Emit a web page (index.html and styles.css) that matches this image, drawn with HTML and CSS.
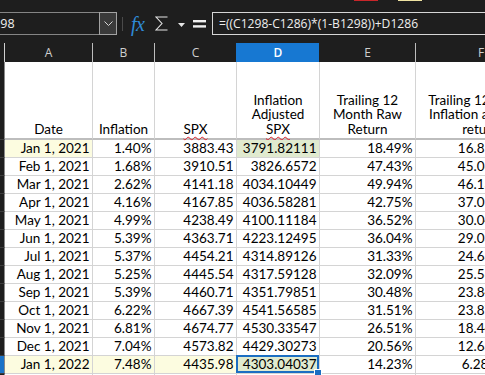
FILE: index.html
```html
<!DOCTYPE html>
<html>
<head>
<meta charset="utf-8">
<link rel="stylesheet" href="styles.css">
</head>
<body>
<div class="top">
  <div class="ribbon-marks"><span class="mark red"></span><span class="mark yellow"></span></div>
  <div class="fbar">
    <div class="namebox">
      <span class="nb-text">D1298</span>
      <span class="nb-drop"><svg width="9" height="5" viewBox="0 0 9 5"><polyline points="0.5,0.5 4.5,4.5 8.5,0.5" fill="none" stroke="#d4d4d4" stroke-width="1"/></svg></span>
    </div>
    <span class="vsep"></span>
    <span class="fx">fx</span>
    <svg class="sigma" width="13" height="15" viewBox="0 0 13 15"><path d="M12.5,1 H1 L7,7.5 L1,14 H12.5" fill="none" stroke="#e6e6e6" stroke-width="1.1"/></svg>
    <svg class="tri" width="7" height="4" viewBox="0 0 7 4"><polygon points="0,0 7,0 3.5,4" fill="#e6e6e6"/></svg>
    <svg class="eq" width="13" height="8" viewBox="0 0 13 8"><rect x="0" y="0" width="13" height="2.4" fill="#f0f0f0"/><rect x="0" y="5.2" width="13" height="2.4" fill="#f0f0f0"/></svg>
    <div class="formula">=((C1298-C1286)*(1-B1298))+D1286</div>
  </div>
</div>

<div class="colhdr">
  <div class="ch corner"></div>
  <div class="ch">A</div>
  <div class="ch">B</div>
  <div class="ch cc">C</div>
  <div class="ch cd">D</div>
  <div class="ch">E</div>
  <div class="ch cf">F</div>
</div>

<div class="sheet">
  <div class="rh rh-head"></div>
  <div class="h"><span>Date</span></div>
  <div class="h"><span>Inflation</span></div>
  <div class="h"><span class="spell">SPX</span></div>
  <div class="h"><span>Inflation</span><span>Adjusted</span><span class="spell">SPX</span></div>
  <div class="h"><span>Trailing 12</span><span>Month Raw</span><span>Return</span></div>
  <div class="h"><span>Trailing 12 Month</span><span>Inflation adjusted</span><span>return</span></div>

  <div class="rh"></div><div class="c yel">Jan 1, 2021</div><div class="c">1.40%</div><div class="c">3883.43</div><div class="c grn">3791.82111</div><div class="c">18.49%</div><div class="c f">16.85%</div>
  <div class="rh"></div><div class="c">Feb 1, 2021</div><div class="c">1.68%</div><div class="c">3910.51</div><div class="c">3826.6572</div><div class="c">47.43%</div><div class="c f">45.06%</div>
  <div class="rh"></div><div class="c">Mar 1, 2021</div><div class="c">2.62%</div><div class="c">4141.18</div><div class="c">4034.10449</div><div class="c">49.94%</div><div class="c f">46.13%</div>
  <div class="rh"></div><div class="c">Apr 1, 2021</div><div class="c">4.16%</div><div class="c">4167.85</div><div class="c">4036.58281</div><div class="c">42.75%</div><div class="c f">37.05%</div>
  <div class="rh"></div><div class="c">May 1, 2021</div><div class="c">4.99%</div><div class="c">4238.49</div><div class="c">4100.11184</div><div class="c">36.52%</div><div class="c f">30.04%</div>
  <div class="rh"></div><div class="c">Jun 1, 2021</div><div class="c">5.39%</div><div class="c">4363.71</div><div class="c">4223.12495</div><div class="c">36.04%</div><div class="c f">29.03%</div>
  <div class="rh"></div><div class="c">Jul 1, 2021</div><div class="c">5.37%</div><div class="c">4454.21</div><div class="c">4314.89126</div><div class="c">31.33%</div><div class="c f">24.63%</div>
  <div class="rh"></div><div class="c">Aug 1, 2021</div><div class="c">5.25%</div><div class="c">4445.54</div><div class="c">4317.59128</div><div class="c">32.09%</div><div class="c f">25.56%</div>
  <div class="rh"></div><div class="c">Sep 1, 2021</div><div class="c">5.39%</div><div class="c">4460.71</div><div class="c">4351.79851</div><div class="c">30.48%</div><div class="c f">23.84%</div>
  <div class="rh"></div><div class="c">Oct 1, 2021</div><div class="c">6.22%</div><div class="c">4667.39</div><div class="c">4541.56585</div><div class="c">31.51%</div><div class="c f">23.87%</div>
  <div class="rh"></div><div class="c">Nov 1, 2021</div><div class="c">6.81%</div><div class="c">4674.77</div><div class="c">4530.33547</div><div class="c">26.51%</div><div class="c f">18.44%</div>
  <div class="rh"></div><div class="c">Dec 1, 2021</div><div class="c">7.04%</div><div class="c">4573.82</div><div class="c">4429.30273</div><div class="c">20.56%</div><div class="c f">12.63%</div>
  <div class="rh sel-row"></div><div class="c yel">Jan 1, 2022</div><div class="c yel">7.48%</div><div class="c yel">4435.98</div><div class="c grn active">4303.04037</div><div class="c">14.23%</div><div class="c f">6.28%</div>
  <div class="rh"></div><div class="c"></div><div class="c"></div><div class="c"></div><div class="c"></div><div class="c"></div><div class="c f"></div>
</div>
</body>
</html>
```

FILE: styles.css
```css
* { box-sizing: border-box; }
html, body { margin: 0; padding: 0; }
body {
  width: 485px;
  height: 375px;
  overflow: hidden;
  background: #ffffff;
  font-family: Lato, "Liberation Sans", sans-serif;
}

/* ---------- formula bar ---------- */
.top {
  background: #1e1e1e;
  height: 43px;
  display: flex;
  flex-direction: column;
}
.ribbon-marks { display: flex; height: 2px; }
.mark { height: 1px; width: 24px; }
.mark.red { margin-left: 354px; background: #c8262a; }
.mark.yellow { margin-left: 20px; background: #efe3a2; }

.fbar {
  flex: 1;
  display: flex;
  align-items: center;
  padding-top: 2px;
  white-space: nowrap;
}
.namebox {
  margin-left: -40px;
  width: 157px;
  height: 23px;
  border: 1px solid #858585;
  display: flex;
  flex: none;
}
.nb-text {
  flex: 1;
  color: #f0f0f0;
  font-family: "Open Sans", sans-serif;
  font-size: 12.5px;
  line-height: 21px;
  padding-left: 16px;
}
.nb-drop {
  width: 18px;
  margin: -1px -1px -1px 0;
  border: 1px solid #a3a3a3;
  background: #3a3a3a;
  display: flex;
  align-items: center;
  justify-content: center;
}
.vsep {
  flex: none;
  width: 1px;
  height: 14px;
  background: #4a4a4a;
  margin-left: 5px;
}
.fx {
  flex: none;
  width: 16px;
  margin-left: 8px;
  color: #2f8ad6;
  font-family: "Liberation Serif", serif;
  font-style: italic;
  font-size: 20px;
  line-height: 20px;
  letter-spacing: -0.5px;
}
.sigma { flex: none; margin-left: 8px; }
.tri { flex: none; margin-left: 10px; margin-top: 3px; }
.eq { flex: none; margin-left: 8px; }
.formula {
  flex: none;
  width: 290px;
  margin-left: 6px;
  height: 23px;
  border: 1px solid #d6d6d6;
  color: #eeeeee;
  font-family: "Open Sans", sans-serif;
  font-size: 12.1px;
  line-height: 21px;
  padding-left: 6px;
}

/* ---------- column headers ---------- */
.colhdr {
  display: grid;
  grid-template-columns: 5px 88px 62px 82px 83px 96px 130px;
  grid-template-rows: 19px;
  width: max-content;
  height: 19px;
  background: #1e1e1e;
}
.ch {
  border-right: 1px solid #bdbdbd;
  color: #cfcfcf;
  font-family: "Open Sans", sans-serif;
  font-size: 12px;
  line-height: 19px;
  text-align: center;
}
.ch.corner { border-right-color: #d0d0d0; }
.ch.cc { border-right-color: #1778d2; }
.ch.cd { background: #1778d2; color: #ffffff; border-right-color: #1e1e1e; font-weight: 600; }
.ch.cf { border-right: none; }

/* ---------- sheet ---------- */
.sheet {
  display: grid;
  grid-template-columns: 5px 88px 62px 82px 83px 96px 130px;
  width: max-content;
  color: #000000;
  font-size: 13.5px;
}
.rh {
  background: #1e1e1e;
  border-right: 1px solid #8a8a8a;
  border-bottom: 1px solid #3c3c3c;
  height: 18px;
}
.rh.rh-head { height: 78px; }
.rh.sel-row { background: #1a73c8; }

.h {
  height: 78px;
  border-right: 1px solid #d4d4d4;
  border-bottom: 2px solid #bdbdbd;
  display: flex;
  flex-direction: column;
  justify-content: flex-end;
  align-items: center;
  text-align: center;
  line-height: 14.5px;
  padding-bottom: 2px;
  white-space: nowrap;
}
.spell {
  text-decoration: underline wavy #e0202a;
  text-decoration-thickness: 1px;
  text-underline-offset: 2px;
}

.c {
  position: relative;
  height: 18px;
  border-right: 1px solid #d4d4d4;
  border-bottom: 1px solid #d4d4d4;
  line-height: 17px;
  text-align: right;
  padding-right: 2.5px;
  white-space: nowrap;
}
.c.f { text-align: center; padding-right: 0; }
.yel { background: #fcfce0; }
.grn { background: #e0eacf; }

.active::after {
  content: "";
  position: absolute;
  left: -1px;
  top: -1px;
  right: 0;
  bottom: 0;
  border: 2px solid #1b6ec2;
}
.active::before {
  content: "";
  position: absolute;
  right: -3px;
  bottom: -4px;
  width: 6px;
  height: 6px;
  background: #1b6ec2;
  border: 1px solid #ffffff;
  z-index: 2;
}
```
